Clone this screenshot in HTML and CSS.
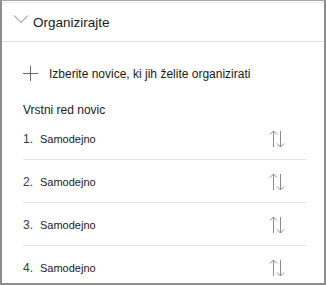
FILE: index.html
```html
<!DOCTYPE html>
<html>
<head>
<meta charset="utf-8">
<link rel="stylesheet" href="styles.css">
</head>
<body>
<div class="panel">
  <div class="topline"></div>
  <div class="header">
    <svg class="chev" width="16" height="10" viewBox="0 0 16 10"><path d="M1 1.5 L8 8.5 L15 1.5" fill="none" stroke="#7a7a7a" stroke-width="1"/></svg>
    <span class="title">Organizirajte</span>
  </div>
  <div class="content">
    <div class="add">
      <svg class="plus" width="15" height="15" viewBox="0 0 15 15"><path d="M7.5 0 V15 M0 7.5 H15" fill="none" stroke="#6a6a6a" stroke-width="1"/></svg>
      <span>Izberite novice, ki jih želite organizirati</span>
    </div>
    <div class="label">Vrstni red novic</div>
    <ol class="list">
      <li class="row"><span class="num">1.</span><span class="name">Samodejno</span><svg class="sort" width="16" height="18" viewBox="0 0 16 18"><path d="M4.5 17 V1 M1 4.5 L4.5 1 L8 4.5 M11.5 1 V17 M8 13.5 L11.5 17 L15 13.5" fill="none" stroke="#8a8a8a" stroke-width="1"/></svg></li>
      <li class="row"><span class="num">2.</span><span class="name">Samodejno</span><svg class="sort" width="16" height="18" viewBox="0 0 16 18"><path d="M4.5 17 V1 M1 4.5 L4.5 1 L8 4.5 M11.5 1 V17 M8 13.5 L11.5 17 L15 13.5" fill="none" stroke="#8a8a8a" stroke-width="1"/></svg></li>
      <li class="row"><span class="num">3.</span><span class="name">Samodejno</span><svg class="sort" width="16" height="18" viewBox="0 0 16 18"><path d="M4.5 17 V1 M1 4.5 L4.5 1 L8 4.5 M11.5 1 V17 M8 13.5 L11.5 17 L15 13.5" fill="none" stroke="#8a8a8a" stroke-width="1"/></svg></li>
      <li class="row"><span class="num">4.</span><span class="name">Samodejno</span><svg class="sort" width="16" height="18" viewBox="0 0 16 18"><path d="M4.5 17 V1 M1 4.5 L4.5 1 L8 4.5 M11.5 1 V17 M8 13.5 L11.5 17 L15 13.5" fill="none" stroke="#8a8a8a" stroke-width="1"/></svg></li>
    </ol>
  </div>
</div>
</body>
</html>
```
FILE: styles.css
```css
html, body {
  margin: 0;
  padding: 0;
  background: #ffffff;
}
.panel {
  box-sizing: border-box;
  width: 326px;
  height: 285px;
  border-left: 2px solid #8c8c8c;
  border-right: 2px solid #8c8c8c;
  border-bottom: 2px solid #8c8c8c;
  border-top: 1px solid #a8a8a8;
  font-family: "Liberation Sans", Arial, sans-serif;
  color: #1a1a1a;
  overflow: hidden;
}
.topline {
  height: 1px;
  margin-top: 1px;
  background: #ececec;
}
.header {
  display: flex;
  align-items: center;
  height: 38px;
  padding-left: 11px;
  border-bottom: 1px solid #e1e1e1;
  gap: 4px;
}
.chev {
  margin-top: -6px;
}
.title {
  font-size: 13.5px;
}
.content {
  padding: 0 17px 0 21px;
}
.add {
  display: flex;
  align-items: center;
  gap: 11px;
  margin-top: 24px;
  font-size: 12px;
}
.label {
  margin-top: 22px;
  font-size: 12px;
}
.list {
  list-style: none;
  margin: 0;
  padding: 0;
}
.row {
  display: flex;
  align-items: center;
  height: 43px;
  padding-top: 1px;
  border-bottom: 1px solid #e6e6e6;
  font-size: 11px;
  box-sizing: border-box;
}
.row:last-child {
  border-bottom: none;
}
.num {
  width: 17px;
  font-size: 12px;
  color: #3a3a3a;
}
.name {
  flex: 1;
}
.sort {
  margin-right: 22px;
}
```
